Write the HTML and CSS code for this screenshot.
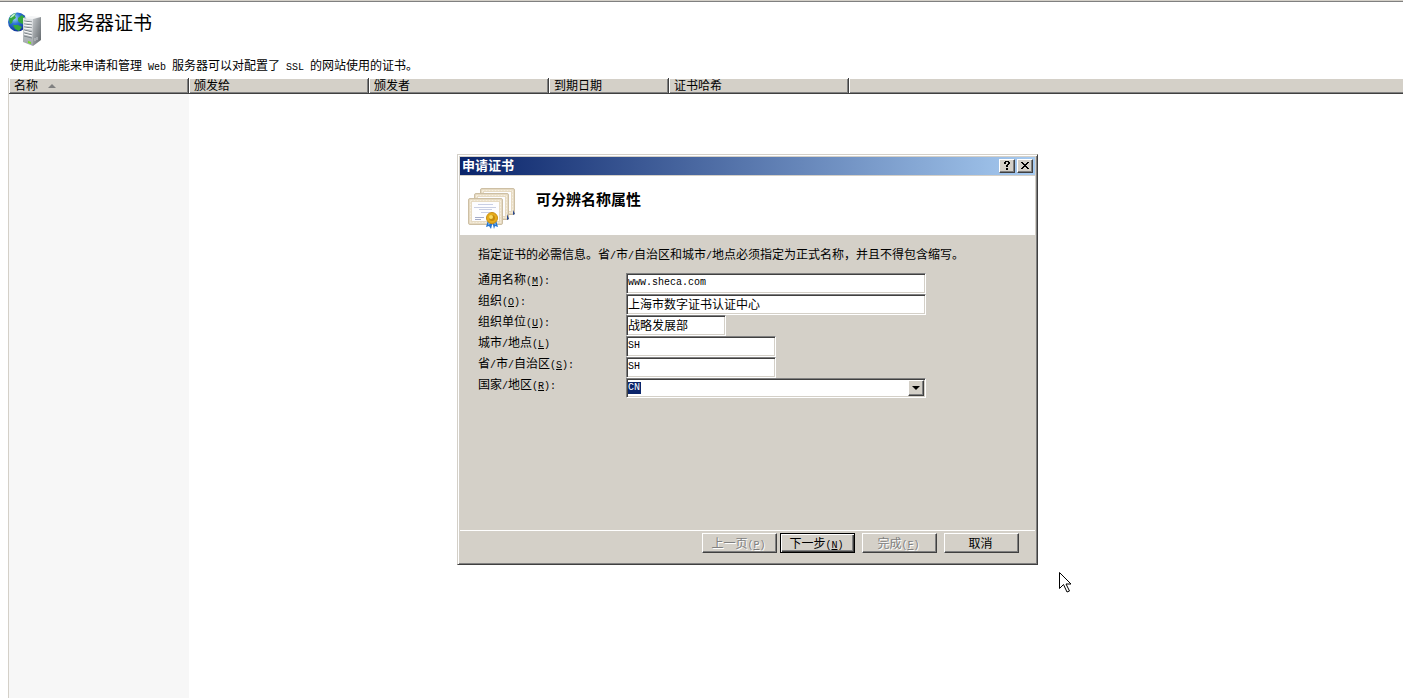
FILE: index.html
```html
<!DOCTYPE html>
<html lang="zh-CN">
<head>
  <meta charset="UTF-8">
  <meta name="viewport" content="width=device-width, initial-scale=1.0">
  <title>服务器证书</title>
  <link rel="stylesheet" href="styles.css">
</head>
<body>
  <main class="page">
    <header class="page-header">
      <svg class="server-icon" width="34" height="34" viewBox="0 0 34 34" aria-hidden="true">
        <defs>
          <radialGradient id="globe" cx="0.35" cy="0.3" r="0.75">
            <stop offset="0" stop-color="#a8d8fa"/>
            <stop offset="0.4" stop-color="#2c74d4"/>
            <stop offset="1" stop-color="#0c2c94"/>
          </radialGradient>
          <linearGradient id="front" x1="0" y1="0" x2="0" y2="1">
            <stop offset="0" stop-color="#e4e7e9"/>
            <stop offset="1" stop-color="#9da3a7"/>
          </linearGradient>
          <linearGradient id="side" x1="0" y1="0" x2="1" y2="1">
            <stop offset="0" stop-color="#c3c7ca"/>
            <stop offset="1" stop-color="#5c6266"/>
          </linearGradient>
        </defs>
        <circle cx="9.500" cy="10" r="9.500" fill="url(#globe)"/>
        <path d="M1 7q2-5 7-6l-1 3 1 2-3 2-1 3-2 1zM10 6l4-3 3 3 1 4-3 2-3-1-2-2zM5 13l5 0 4 2-3 4-4-2z" fill="#35a83c"/>
        <path d="M2 6q2-4 6-5l-2 3-3 2z" fill="#c4f0d0"/>
        <path d="M15 6l8-2 10 1-8 2z" fill="#f4f5f6"/>
        <path d="M15 6l10 1v27l-10-4z" fill="url(#front)"/>
        <path d="M25 7l8-2v23l-8 6z" fill="url(#side)"/>
        <path d="M16 9l8 1M16 12l8 1M16 15l8 1M16 18l8 2M16 21l8 2M16 24l8 2" stroke="#7b8388" fill="none"/>
        <path d="M16 10l8 1M16 13l8 1M16 16l8 1M16 19l8 2M16 22l8 2" stroke="#fff" fill="none"/>
        <path d="M20 29l3 1v2l-3-1z" fill="#74e020"/>
        <path d="M27 26v3M29 25v3" stroke="#c5cacd"/>
      </svg>
      <h1 class="page-title">服务器证书</h1>
    </header>
    <p class="page-desc">使用此功能来申请和管理<span class="latin"> Web </span>服务器可以对配置了<span class="latin"> SSL </span>的网站使用的证书。</p>

    <table class="cert-table">
      <thead>
        <tr>
          <th class="col-name" aria-sort="ascending">名称<span class="sort-arrow"></span></th>
          <th class="col-wide">颁发给</th>
          <th class="col-wide">颁发者</th>
          <th class="col-date">到期日期</th>
          <th class="col-wide">证书哈希</th>
          <th class="col-rest"></th>
        </tr>
      </thead>
      <tbody>
        <tr>
          <td class="sorted"></td>
          <td></td>
          <td></td>
          <td></td>
          <td></td>
          <td></td>
        </tr>
      </tbody>
    </table>
  </main>

  <!-- Request certificate wizard -->
  <form class="dialog" role="dialog" aria-labelledby="dialog-title">
    <div class="titlebar">
      <span class="titlebar-text" id="dialog-title">申请证书</span>
      <button type="button" class="caption-btn" aria-label="帮助">
        <svg width="8" height="9" viewBox="0 0 8 9"><path d="M1 2h2v1h-2zM2 0h4v1h-4zM1 1h2v1h-2zM5 1h2v2h-2zM4 3h2v1h-2zM3 4h2v2h-2zM3 7h2v2h-2z"/></svg>
      </button>
      <button type="button" class="caption-btn" aria-label="关闭">
        <svg width="8" height="7" viewBox="0 0 8 7" shape-rendering="crispEdges"><path d="M0 0h2v1h-2zM6 0h2v1h-2zM1 1h2v1h-2zM5 1h2v1h-2zM2 2h4v1h-4zM3 3h2v1h-2zM2 4h4v1h-4zM1 5h2v1h-2zM5 5h2v1h-2zM0 6h2v1h-2zM6 6h2v1h-2z"/></svg>
      </button>
    </div>

    <div class="banner">
      <svg class="cert-icon" width="50" height="44" viewBox="0 0 50 44" aria-hidden="true">
        <defs>
          <g id="sheet">
            <rect x="0.500" y="0.500" width="34" height="26" rx="1.500" fill="#e6dac2" stroke="#cdbfa4"/>
            <rect x="2.500" y="2.500" width="30" height="22" fill="none" stroke="#f6efdf" stroke-dasharray="2 1"/>
            <rect x="4" y="4" width="27" height="19" fill="#fdfdff"/>
          </g>
        </defs>
        <use href="#sheet" x="13" y="1"/>
        <path d="M46 23l2 4-2 1z" fill="#27468c"/>
        <use href="#sheet" x="7" y="6"/>
        <path d="M40 27l2 5-2 1z" fill="#27468c"/>
        <use href="#sheet" x="1" y="11"/>
        <path d="M11 17.500h15M7 20.500h22M12 22.500h13M14 25.500h9" stroke="#c9cfe4"/>
        <path d="M8 30.500h9M8 32.500h6" stroke="#a3abc8"/>
        <path d="M21 33l-2 7 3-1 2 3 2-8zM25 34l2 8 1-3 3 1-2-7z" fill="#2474d2"/>
        <path d="M22 34l-1 4 2-1zM28 35l1 3-2-1z" fill="#8bc5f6"/>
        <circle cx="25" cy="31" r="5.500" fill="#e6ac1b" stroke="#c98e14"/>
        <circle cx="25" cy="31" r="3" fill="#c58a0d"/>
        <circle cx="24" cy="30" r="2" fill="#f8db61"/>
      </svg>
      <h2 class="banner-title">可分辨名称属性</h2>
    </div>

    <div class="dialog-body">
      <p class="intro">指定证书的必需信息。省<span class="latin">/</span>市<span class="latin">/</span>自治区和城市<span class="latin">/</span>地点必须指定为正式名称，并且不得包含缩写。</p>
      <div class="fields">
        <label for="common-name">通用名称<span class="latin">(<u>M</u>):</span></label>
        <input type="text" id="common-name" class="field latin" value="www.sheca.com">

        <label for="org">组织<span class="latin">(<u>O</u>):</span></label>
        <input type="text" id="org" class="field" value="上海市数字证书认证中心">

        <label for="org-unit">组织单位<span class="latin">(<u>U</u>):</span></label>
        <input type="text" id="org-unit" class="field short" value="战略发展部">

        <label for="city">城市<span class="latin">/</span>地点<span class="latin">(<u>L</u>)</span></label>
        <input type="text" id="city" class="field medium latin" value="SH">

        <label for="state">省<span class="latin">/</span>市<span class="latin">/</span>自治区<span class="latin">(<u>S</u>):</span></label>
        <input type="text" id="state" class="field medium latin" value="SH">

        <label for="country">国家<span class="latin">/</span>地区<span class="latin">(<u>R</u>):</span></label>
        <div class="combo">
          <select id="country" class="combo-select latin">
            <option selected>CN</option>
          </select>
          <span class="combo-arrow"></span>
        </div>
      </div>
    </div>

    <div class="dialog-footer">
      <div class="nav-buttons">
        <button type="button" class="btn" disabled>上一页<span class="latin">(<u>P</u>)</span></button>
        <button type="button" class="btn btn-default">下一步<span class="latin">(<u>N</u>)</span></button>
      </div>
      <button type="button" class="btn" disabled>完成<span class="latin">(<u>F</u>)</span></button>
      <button type="button" class="btn">取消</button>
    </div>
  </form>

  <svg class="pointer" width="13" height="22" viewBox="0 0 13 22" aria-hidden="true">
    <path d="M0.500 0.500v16l4-4 3.500 7.500 2.500-1-3.500-7h5z" fill="#fff" stroke="#000"/>
  </svg>
</body>
</html>
```

FILE: styles.css
```css
:root {
  --face: #d4d0c8;
  --shadow: #808080;
  --dark: #404040;
  --navy: #0a246a;
}
* {
  box-sizing: border-box;
}
body {
  margin: 0;
  background: #fff;
  color: #000;
  font-family: "Liberation Sans", "Noto Sans CJK SC", sans-serif;
  font-size: 12px;
  line-height: 14px;
}
h1, h2, p {
  margin: 0;
}
button, input, select {
  font: inherit;
  color: inherit;
}
/* Half-width characters, 6px each */
.latin {
  font-family: "Liberation Mono", monospace;
  font-size: 10px;
  white-space: pre;
}
/* keeps the smaller face from making its line taller */
span.latin {
  line-height: 1;
}

/* Page */
.page {
  display: flex;
  flex-direction: column;
  min-height: 100vh;
  padding-left: 8px;
  border-top: 1px solid var(--face);
  box-shadow: inset 0 1px 0 var(--shadow);
}
.page-header {
  display: flex;
  align-items: flex-start;
  gap: 15px;
  padding-top: 11px;
}
.server-icon {
  flex: none;
}
.page-title {
  font-size: 19px;
  font-weight: normal;
  line-height: 24px;
}
.page-desc {
  padding: 13px 2px 5px;
}

/* Certificate list */
.cert-table {
  flex: 1;
  width: 100%;
  table-layout: fixed;
  border-collapse: separate;
  border-spacing: 0;
  border-left: 1px solid var(--face);
}
.cert-table th {
  height: 16px;
  padding: 0 5px;
  background: var(--face);
  border-right: 1px solid var(--dark);
  border-bottom: 1px solid var(--dark);
  box-shadow: inset 1px 1px 0 #fff, inset -1px -1px 0 var(--shadow);
  font-weight: normal;
  text-align: left;
  line-height: 14px;
}
.cert-table td {
  padding: 0;
}
.cert-table .col-rest {
  border-right: 0;
  box-shadow: inset 1px 1px 0 #fff, inset 0 -1px 0 var(--shadow);
}
.cert-table .sorted {
  background: #f7f7f7;
}
.col-name, .col-wide {
  width: 180px;
}
.col-date {
  width: 120px;
}
.sort-arrow {
  display: inline-block;
  margin-left: 10px;
  border: 4px solid transparent;
  border-top: 0;
  border-bottom-color: var(--shadow);
  vertical-align: middle;
}

/* Dialog window */
.dialog {
  position: absolute;
  left: 457px;
  top: 154px;
  width: 581px;
  padding: 2px;
  background: var(--face);
  border: 1px solid;
  border-color: var(--face) var(--dark) var(--dark) var(--face);
  box-shadow: inset 1px 1px 0 #fff, inset -1px -1px 0 var(--shadow);
}
.titlebar {
  display: flex;
  align-items: center;
  gap: 2px;
  height: 18px;
  margin-bottom: 1px;
  padding: 0 2px;
  background: linear-gradient(to right, var(--navy), #a6caf0);
  color: #fff;
}
.titlebar-text {
  flex: 1;
  font-size: 13px;
  font-weight: bold;
  line-height: 16px;
}
.caption-btn {
  display: flex;
  align-items: center;
  justify-content: center;
  width: 16px;
  height: 14px;
  padding: 0 1px 1px 0;
  background: var(--face);
  border: 1px solid;
  border-color: #fff var(--dark) var(--dark) #fff;
  box-shadow: inset -1px -1px 0 var(--shadow);
}
.banner {
  display: flex;
  align-items: flex-start;
  gap: 19px;
  height: 59px;
  padding: 11px 7px 0;
  background: #fff;
}
.banner-title {
  padding-top: 3px;
  font-size: 15px;
  line-height: 20px;
}
.dialog-body {
  min-height: 295px;
  padding: 13px 18px;
}
.intro {
  margin-bottom: 11px;
}
.fields {
  display: grid;
  grid-template-columns: 148px 300px;
  grid-auto-rows: 21px;
}
.field, .combo {
  width: 100%;
  height: 21px;
  background: #fff;
  border: 1px solid;
  border-color: var(--shadow) #fff #fff var(--shadow);
  box-shadow: inset 1px 1px 0 var(--dark), inset -1px -1px 0 var(--face);
}
.field {
  padding: 0 1px 3px;
  outline: 0;
}
.field.short {
  width: 100px;
}
.field.medium {
  width: 150px;
}
.combo {
  display: flex;
  height: 20px;
  padding: 1px;
}
/* The value is shown selected, navy behind the two letters */
.combo-select {
  flex: 1;
  padding: 0;
  appearance: none;
  border: 0;
  outline: 0;
  background: linear-gradient(var(--navy), var(--navy)) 0 2px / 13px 12px no-repeat;
  color: #fff;
}
.combo-arrow {
  display: flex;
  align-items: center;
  justify-content: center;
  width: 16px;
  margin-left: -16px;
  background: var(--face);
  border: 1px solid;
  border-color: #fff var(--dark) var(--dark) #fff;
  box-shadow: inset -1px -1px 0 var(--shadow);
  pointer-events: none;
}
.combo-arrow::before {
  content: "";
  border: 4px solid transparent;
  border-top-color: #000;
  border-bottom: 0;
}

/* Wizard buttons */
.dialog-footer {
  display: flex;
  justify-content: flex-end;
  gap: 7px;
  padding: 2px 16px 9px;
  border-top: 1px solid #fff;
}
.nav-buttons {
  display: flex;
  gap: 3px;
}
.btn {
  width: 75px;
  height: 20px;
  padding: 2px 2px 0 0;
  background: var(--face);
  border: 1px solid;
  border-color: #fff var(--dark) var(--dark) #fff;
  box-shadow: inset -1px -1px 0 var(--shadow);
  line-height: 14px;
}
.btn:disabled {
  color: var(--shadow);
  text-shadow: 1px 1px 0 #fff;
}
.btn-default {
  border-color: #000;
  box-shadow: inset 1px 1px 0 #fff, inset -1px -1px 0 var(--dark), inset -2px -2px 0 var(--shadow);
}

.pointer {
  position: absolute;
  left: 1059px;
  top: 572px;
  pointer-events: none;
}
```
